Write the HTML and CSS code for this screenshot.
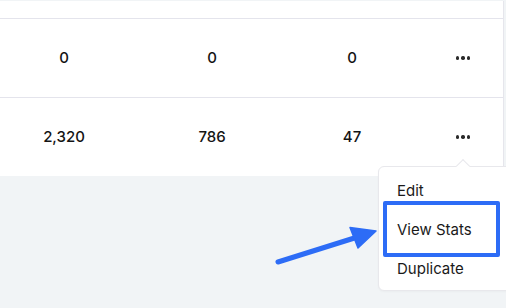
FILE: index.html
```html
<!DOCTYPE html>
<html>
<head>
<meta charset="utf-8">
<link rel="stylesheet" href="styles.css">
</head>
<body>
<div class="page">
  <div class="card">
    <div class="row head"></div>
    <div class="row">
      <div class="cell">0</div>
      <div class="cell">0</div>
      <div class="cell">0</div>
      <div class="cell more"><span class="dots"><i></i><i></i><i></i></span></div>
    </div>
    <div class="row">
      <div class="cell">2,320</div>
      <div class="cell">786</div>
      <div class="cell">47</div>
      <div class="cell more"><span class="dots"><i></i><i></i><i></i></span></div>
    </div>
  </div>

  <div class="menu">
    <div class="caret"></div>
    <div class="item">Edit</div>
    <div class="item">View Stats</div>
    <div class="item">Duplicate</div>
    <div class="highlight"></div>
  </div>

  <svg class="arrow" width="506" height="308" viewBox="0 0 506 308">
    <line x1="278" y1="262" x2="356" y2="237.5" stroke="#2d6cf6" stroke-width="5" stroke-linecap="round"/>
    <polygon points="350,227.5 358,248 376,231" fill="#2d6cf6" stroke="#2d6cf6" stroke-width="1.5" stroke-linejoin="round"/>
  </svg>
</div>
</body>
</html>
```

FILE: styles.css
```css
html, body {
  margin: 0;
  padding: 0;
}
body {
  font-family: Inter, "Noto Sans", sans-serif;
  color: #141414;
}
.page {
  position: relative;
  width: 506px;
  height: 308px;
  overflow: hidden;
  background: #f1f4f6;
}
.card {
  margin-top: 1px;
  width: 503px;
  background: #fff;
  border-right: 1px solid #e6e6ec;
}
.row {
  display: grid;
  grid-template-columns: 128px 168px 112px 1fr;
  align-items: center;
  height: 78px;
  border-bottom: 1px solid #e4e4ec;
}
.row.head {
  height: 17px;
}
.row:last-child {
  border-bottom: none;
}
.cell {
  text-align: center;
  font-size: 15px;
  font-weight: 500;
  line-height: 20px;
}
.cell.more {
  display: flex;
  padding-left: 48px;
}
.dots {
  display: flex;
  gap: 2px;
}
.dots i {
  width: 3.4px;
  height: 3.4px;
  border-radius: 50%;
  background: #2a2a2a;
}
.menu {
  position: absolute;
  left: 378px;
  top: 166px;
  width: 140px;
  box-sizing: border-box;
  padding: 4px 0 2px;
  background: #fff;
  border: 1px solid #e8e8ec;
  border-radius: 6px;
  box-shadow: 0 1px 2px rgba(0, 0, 0, 0.03);
}
.caret {
  position: absolute;
  left: 79px;
  top: -6px;
  width: 9px;
  height: 9px;
  background: #fff;
  border-left: 1px solid #e8e8ec;
  border-top: 1px solid #e8e8ec;
  transform: rotate(45deg);
}
.item {
  height: 39px;
  display: flex;
  align-items: center;
  padding-left: 18px;
  font-size: 15px;
  line-height: 20px;
  color: #1a1a1a;
}
.highlight {
  position: absolute;
  left: 4px;
  top: 34px;
  width: 117px;
  height: 56px;
  box-sizing: border-box;
  border: 4px solid #2d6cf6;
  border-radius: 2px;
}
.arrow {
  position: absolute;
  left: 0;
  top: 0;
  pointer-events: none;
}
```
